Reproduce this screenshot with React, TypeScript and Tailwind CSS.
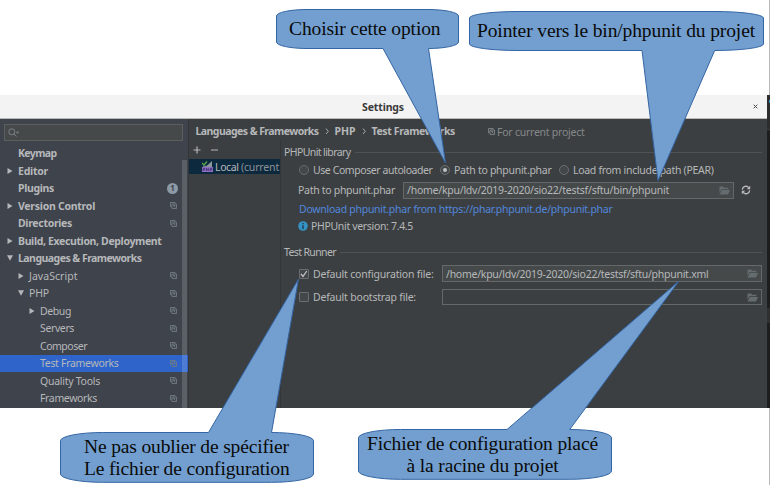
import { useLayoutEffect, useRef, useState } from "react";

type FitProps = { w: number; children: string; className?: string };

/* A single line of text whose tracking is adjusted so that it spans w pixels. */
function Fit({ w, children, className = "" }: FitProps) {
  const ref = useRef<HTMLSpanElement>(null);
  const [spacing, setSpacing] = useState(0);
  useLayoutEffect(() => {
    if (ref.current) {
      const natural = ref.current.getBoundingClientRect().width;
      setSpacing((w - natural) / children.length);
    }
  }, []);
  return (
    <span ref={ref} className={`inline-block shrink-0 whitespace-pre ${className}`} style={{ letterSpacing: spacing }}>
      {children}
    </span>
  );
}

function ProjectIcon({ className = "" }: { className?: string }) {
  return (
    <svg viewBox="0 0 7 7" className={`size-[7px] shrink-0 ${className}`} fill="none" stroke="currentColor" strokeWidth="0.9">
      <path d="M1.7 4.8H.5V.5h4.6v1.2" />
      <path d="M2 2h4.5v4.5H2zM3.2 3.3h2.1M3.2 3.3l2.2 2" />
    </svg>
  );
}

function FolderIcon() {
  return (
    <svg viewBox="0 0 11 9" className="h-[9px] w-[11px] shrink-0" fill="#646c70">
      <path d="M.5.5h3.6l1 1.2h4.2v1.6H2.3L.5 7z" />
      <path d="M2.7 4H11L9 8.4H.6z" />
    </svg>
  );
}

function Arrow({ open }: { open: boolean }) {
  return (
    <svg viewBox="0 0 6 6" className="size-[6px]" fill="#b4b6b9">
      <path d={open ? "M0 .3h6L3 5.7z" : "M.5 0v6l5-3z"} />
    </svg>
  );
}

function Chevron() {
  return (
    <svg viewBox="0 0 16 8" className="h-2 w-4 shrink-0" fill="none" stroke="#a9abad">
      <path d="M7 1.5L9.3 4.3L7 7" />
    </svg>
  );
}

type Item = { label: string; w: number; level: number; bold?: boolean; arrow?: "open" | "closed"; icon?: boolean; badge?: boolean; selected?: boolean };

const items: Item[] = [
  { label: "Keymap", w: 38.5, level: 0, bold: true },
  { label: "Editor", w: 30, level: 0, bold: true, arrow: "closed" },
  { label: "Plugins", w: 36, level: 0, bold: true, badge: true },
  { label: "Version Control", w: 77, level: 0, bold: true, arrow: "closed", icon: true },
  { label: "Directories", w: 54, level: 0, bold: true, icon: true },
  { label: "Build, Execution, Deployment", w: 143.5, level: 0, bold: true, arrow: "closed" },
  { label: "Languages & Frameworks", w: 123.5, level: 0, bold: true, arrow: "open" },
  { label: "JavaScript", w: 48.5, level: 1, arrow: "closed", icon: true },
  { label: "PHP", w: 20, level: 1, arrow: "open", icon: true },
  { label: "Debug", w: 31, level: 2, arrow: "closed", icon: true },
  { label: "Servers", w: 34, level: 2, icon: true },
  { label: "Composer", w: 47, level: 2, icon: true },
  { label: "Test Frameworks", w: 78.5, level: 2, icon: true, selected: true },
  { label: "Quality Tools", w: 60, level: 2, icon: true },
  { label: "Frameworks", w: 57, level: 2, icon: true },
];

const indents = ["pl-[7px]", "pl-[18px]", "pl-[29px]"];

function Sidebar() {
  return (
    <aside className="relative flex w-[188px] shrink-0 flex-col bg-[#3f434c]">
      <div className="ml-[3.5px] mt-[5px] flex h-[17px] w-[179px] shrink-0 items-center border border-[#5c5f60] bg-[#45494a] pl-[3px]">
        <svg viewBox="0 0 12 9" className="h-[9px] w-3" fill="none" stroke="#7d8183">
          <circle cx="3.8" cy="3.8" r="3" />
          <path d="M6 6l2.3 2.5" />
          <path d="M7.7 3.8h3.6L9.5 5.8z" fill="#7d8183" stroke="none" />
        </svg>
      </div>
      <div className="mt-[3.5px] flex flex-col">
        {items.map((it) => (
          <div
            key={it.label}
            className={`flex h-[17.5px] items-center ${indents[it.level]} ${it.selected ? "bg-[#2f65ca]" : ""} ${it.bold ? "font-bold" : ""}`}
          >
            <span className="w-[11px] shrink-0">{it.arrow && <Arrow open={it.arrow === "open"} />}</span>
            <Fit w={it.w}>{it.label}</Fit>
            {it.icon && <ProjectIcon className="ml-auto mr-[11px] text-[#727a83]" />}
            {it.badge && (
              <span className="ml-auto mr-[10px] flex size-[11px] items-center justify-center rounded-full bg-[#8c99a6] text-[8px] text-[#3f434c]">1</span>
            )}
          </div>
        ))}
      </div>
      <div className="absolute bottom-0 right-px top-[41px] w-[5px] bg-white/15" />
    </aside>
  );
}

function Radio({ checked = false }: { checked?: boolean }) {
  return (
    <span className="flex size-[10px] shrink-0 items-center justify-center rounded-full border border-[#6b6e70] bg-[#43474a]">
      {checked && <span className="size-[4px] rounded-full bg-[#c0c2c3]" />}
    </span>
  );
}

function Check({ checked = false }: { checked?: boolean }) {
  return (
    <span className="flex size-[10px] shrink-0 items-center justify-center rounded-[1px] border border-[#6b6e70] bg-[#43474a]">
      {checked && (
        <svg viewBox="0 0 8 8" className="size-2" fill="none" stroke="#c4c6c7" strokeWidth="1.2">
          <path d="M1 4l2 2.4L6.8 1" />
        </svg>
      )}
    </span>
  );
}

function Section({ label, w }: { label: string; w: number }) {
  return (
    <div className="flex h-4 items-center gap-1 pl-[3px]">
      <Fit w={w}>{label}</Fit>
      <span className="h-px flex-1 bg-[#505355]" />
    </div>
  );
}

function Settings() {
  return (
    <main className="flex flex-1 flex-col bg-[#3c3f41]">
      <div className="flex h-[22px] shrink-0 items-center pl-[6.5px] pt-[2px] font-bold">
        <Fit w={123}>Languages &amp; Frameworks</Fit>
        <Chevron />
        <Fit w={21}>PHP</Fit>
        <Chevron />
        <Fit w={83.5}>Test Frameworks</Fit>
        <ProjectIcon className="ml-[33px] mr-[2px] text-[#7f8385]" />
        <Fit w={87.5} className="pt-px font-normal text-[#85888a]">For current project</Fit>
      </div>
      <div className="flex flex-1">
        <div className="flex w-[92px] flex-col border-r border-[#343739]">
          <div className="flex h-[18px] items-center pl-[4px]">
            <svg viewBox="0 0 26 8" className="h-2 w-[26px]" stroke="#b4b6b7" strokeWidth="1.2">
              <path d="M.5 4h7M4 .5v7M18 4h7" />
            </svg>
          </div>
          <div className="flex h-[15px] items-center bg-[#0d293e] pl-[13px]">
            <svg viewBox="0 0 11 11" className="mr-[2px] size-[11px] shrink-0">
              <path d="M4 5.5L10 0v6H4z" fill="#8d979e" />
              <path d="M0 2l2 2 3-3.5" fill="none" stroke="#56a84b" strokeWidth="1.3" />
              <path d="M1 5.3h4" stroke="#8d979e" />
              <path d="M0 6h11v5H0z" fill="#8c6fc4" />
              <path d="M1.2 10V7.3h1.6v1.5H1.2M4.5 7v3M6.3 7v3M4.5 8.6h1.8M8.2 10V7.3h1.6v1.5H8.2" fill="none" stroke="#3c2868" strokeWidth=".7" />
            </svg>
            <Fit w={26}>Local </Fit>
            <Fit w={38} className="text-[#8b9298]">(current</Fit>
          </div>
        </div>
        <div className="flex flex-1 flex-col pr-[5px] pt-[3px]">
          <Section label="PHPUnit library" w={66.5} />
          <div className="flex h-[20px] items-center pl-[18px]">
            <Radio />
            <Fit w={119.5} className="ml-[4px]">Use Composer autoloader</Fit>
            <span className="w-[7.5px]" />
            <Radio checked />
            <Fit w={97.5} className="ml-[4px]">Path to phpunit.phar</Fit>
            <span className="w-[7.5px]" />
            <Radio />
            <Fit w={140.5} className="ml-[4px]">Load from include path (PEAR)</Fit>
          </div>
          <div className="flex h-[20px] items-center pl-[17px]">
            <Fit w={97}>Path to phpunit.phar</Fit>
            <div className="ml-[8px] flex h-[17px] w-[331px] items-center justify-between border border-[#646869] bg-[#45494a] pl-[3px] pr-[3px]">
              <Fit w={262}>/home/kpu/ldv/2019-2020/sio22/testsf/sftu/bin/phpunit</Fit>
              <FolderIcon />
            </div>
            <svg viewBox="0 0 10 10" className="ml-[7px] size-[10px]" fill="none" stroke="#b8babb" strokeWidth="1.3">
              <path d="M1.3 4.6A3.7 3.7 0 0 1 7.8 2.6" />
              <path d="M8.7 5.4A3.7 3.7 0 0 1 2.2 7.4" />
              <path d="M9.2.8v3.400H5.800zM.8 9.200V5.800h3.400z" fill="#b8babb" stroke="none" />
            </svg>
          </div>
          <div className="flex h-[18px] items-center pl-[18px] text-[#5087dc]">
            <Fit w={313.5}>Download phpunit.phar from https://phar.phpunit.de/phpunit.phar</Fit>
          </div>
          <div className="flex h-[16px] items-center pl-[17px]">
            <svg viewBox="0 0 10 10" className="mr-[3px] size-[10px]">
              <circle cx="5" cy="5" r="4.8" fill="#3592c4" />
              <path d="M5 2v1.3M5 4.3v3.6" stroke="#263b48" strokeWidth="1.4" />
            </svg>
            <Fit w={102}>PHPUnit version: 7.4.5</Fit>
          </div>
          <div className="h-[10px]" />
          <Section label="Test Runner" w={52} />
          <div className="mt-[1px] flex h-[25px] items-center pl-[18px]">
            <Check checked />
            <Fit w={120.5} className="ml-[4px]">Default configuration file:</Fit>
            <div className="ml-auto flex h-[17px] w-[320px] items-center justify-between border border-[#646869] bg-[#45494a] pl-[3px] pr-[3px]">
              <Fit w={262.5}>/home/kpu/ldv/2019-2020/sio22/testsf/sftu/phpunit.xml</Fit>
              <FolderIcon />
            </div>
          </div>
          <div className="flex h-[22px] items-center pl-[18px]">
            <Check />
            <Fit w={103} className="ml-[4px]">Default bootstrap file:</Fit>
            <div className="ml-auto flex h-[16px] w-[320px] items-center justify-end border border-[#646869] pr-[3px]">
              <FolderIcon />
            </div>
          </div>
        </div>
      </div>
    </main>
  );
}

function Callouts() {
  return (
    <div className="absolute inset-0 text-[19.5px] leading-[22px] text-[#0a0a0a] [font-family:'Liberation_Serif',serif]">
      <svg viewBox="0 0 770 485" className="absolute inset-0 h-[485px] w-[770px]" fill="#729fcf" stroke="#3465a4">
        <path d="M307 9.5H428A30.5 6.5 0 0 1 458.5 16V42A30.5 6.5 0 0 1 428.5 48.5L445.5 163L383 48.5H307A30.5 6.5 0 0 1 276.5 42V16A30.5 6.5 0 0 1 307 9.5Z" />
        <path d="M518 11.5H715A49 6.5 0 0 1 763.5 18V44A49 6.5 0 0 1 714.7 50.5L658 180.5L642 50.5H518A49 6.5 0 0 1 469.5 44V18A49 6.5 0 0 1 518 11.5Z" />
        <path d="M102.5 432.5H208.5L298.5 279L271.5 432.5A42 8.3 0 0 1 313.5 440.8V474A42 8.3 0 0 1 271.5 482.3H102.5A42 8.3 0 0 1 60.5 474V440.8A42 8.3 0 0 1 102.5 432.5Z" />
        <path d="M400.5 429.5H507L679 281L569.7 429.5A42 8.3 0 0 1 611.5 437.8V471A42 8.3 0 0 1 569.5 479.3H400.5A42 8.3 0 0 1 358.5 471V437.8A42 8.3 0 0 1 400.5 429.5Z" />
      </svg>
      <div className="absolute left-[289px] top-[18px]">
        <Fit w={151.5}>Choisir cette option</Fit>
      </div>
      <div className="absolute left-[477px] top-[20px]">
        <Fit w={278}>Pointer vers le bin/phpunit du projet</Fit>
      </div>
      <div className="absolute left-[84px] top-[436px] flex flex-col">
        <Fit w={205.5}>Ne pas oublier de spécifier</Fit>
        <Fit w={205.5}>Le fichier de configuration</Fit>
      </div>
      <div className="absolute left-[367px] top-[433px] flex w-[231px] flex-col items-center">
        <Fit w={231}>Fichier de configuration placé</Fit>
        <Fit w={152}>à la racine du projet</Fit>
      </div>
    </div>
  );
}

export default function App() {
  return (
    <div className="relative h-[485px] w-[770px] overflow-hidden bg-white pt-[95px] text-[10.5px] leading-[14px] text-[#b6b8ba] [font-family:'Noto_Sans',sans-serif]">
      <div className="absolute right-0 top-0 h-full w-px bg-[#b8b8b8]" />
      <div className="relative flex h-[313px]">
        <div className="flex w-[767px] flex-col">
          <header className="flex h-[24px] shrink-0 items-center border-b border-[#b9bab5] bg-[#f3f3f3] pl-[362px] pr-[9px] font-bold text-[#3a3a3a]">
            <Fit w={42}>Settings</Fit>
            <svg viewBox="0 0 5 5" className="ml-auto size-[5px]" stroke="#4a4a4a">
              <path d="M.7.7l3.6 3.6M4.3.7L.7 4.3" />
            </svg>
          </header>
          <div className="flex flex-1 overflow-hidden">
            <Sidebar />
            <span className="w-px bg-[#343739]" />
            <Settings />
          </div>
        </div>
        <div className="flex flex-1 flex-col bg-[#1d1e20]">
          <span className="h-[35px] border-b border-[#3c3f41] bg-[#2b2d2f] pl-[2px] pt-[5px]">
            <span className="block h-[3px] bg-[#3592c4]" />
          </span>
          <span className="mt-[178px] h-[15px] bg-[#2f3032]" />
        </div>
      </div>
      <Callouts />
    </div>
  );
}
